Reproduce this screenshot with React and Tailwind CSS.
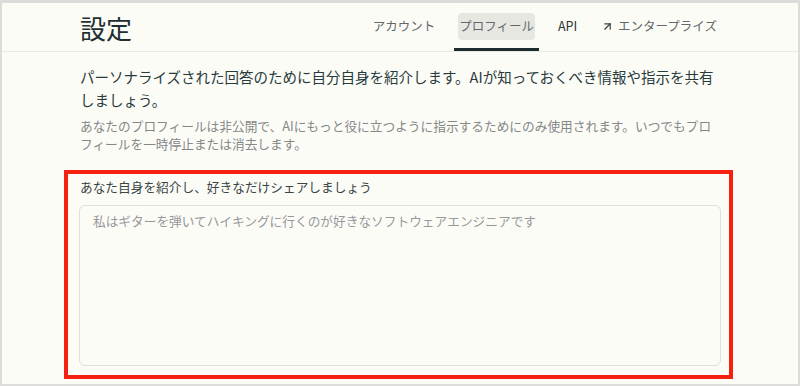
import React from 'react';
import { ArrowUpRight } from 'lucide-react';

const tabs = [
  { label: 'アカウント' },
  { label: 'プロフィール', active: true },
  { label: 'API', latin: true },
  { label: 'エンタープライズ', external: true },
];

function Tab({ tab }) {
  return (
    <div
      className={
        'flex h-full items-center px-1 border-b-[3px] ' +
        (tab.active ? 'border-[#1c2b2d]' : 'border-transparent')
      }
    >
      <div
        className={
          'flex items-center rounded-[4px] px-[1px] h-[27px] ' +
          (tab.active ? 'bg-[#e7e7e2]' : '')
        }
      >
        {tab.external && <ArrowUpRight size={13} strokeWidth={2.2} className="mr-[4px] text-[#3a3f40]" />}
        <span className={tab.latin ? 'text-[#2a3536]' : 'text-[#63696a]'}>{tab.label}</span>
      </div>
    </div>
  );
}

export default function App() {
  return (
    <div
      className="w-[800px] h-[386px] overflow-hidden bg-[#fcfcf7] border-t-[3px] border-x-2 border-b-2 border-[#dcdcda] flex flex-col"
      style={{ fontFamily: '"Noto Sans CJK JP", "Noto Sans", sans-serif' }}
    >
      <header className="h-[49px] shrink-0 flex items-stretch justify-between border-b border-[#e9e9e3] pl-[78px] pr-[76px]">
        <h1 className="self-center text-[26px] leading-none text-[#1f2f32] pt-[2px]">設定</h1>
        <nav className="flex items-stretch gap-[14px] text-[12.5px] pt-[1px]">
          {tabs.map((t) => (
            <Tab key={t.label} tab={t} />
          ))}
        </nav>
      </header>

      <main className="flex flex-col">
        <div className="pl-[78px] pt-[13px]">
          <p className="w-[640px] text-[14.5px] leading-[23px] text-[#283a3c]">
            パーソナライズされた回答のために自分自身を紹介します。AIが知っておくべき情報や指示を共有しましょう。
          </p>
          <p className="w-[640px] mt-[6px] text-[12.7px] leading-[18px] text-[#858887]">
            あなたのプロフィールは非公開で、AIにもっと役に立つように指示するためにのみ使用されます。いつでもプロフィールを一時停止または消去します。
          </p>
        </div>

        <section className="ml-[62px] mt-[17px] w-[669px] h-[209px] border-4 border-[#f5200f] pl-[11px] pr-[8px] pt-[4px] pb-[9px] flex flex-col">
          <label className="ml-px text-[12.7px] leading-[18px] text-[#384546]">
            あなた自身を紹介し、好きなだけシェアしましょう
          </label>
          <textarea
            className="mt-[9px] flex-1 resize-none rounded-[6px] border-[1.5px] border-[#e0e0db] bg-[#fcfcf7] px-[13px] py-[6px] text-[12.7px] leading-[18px] text-[#333] placeholder:text-[#97989a] outline-none"
            placeholder="私はギターを弾いてハイキングに行くのが好きなソフトウェアエンジニアです"
          />
        </section>
      </main>
    </div>
  );
}
